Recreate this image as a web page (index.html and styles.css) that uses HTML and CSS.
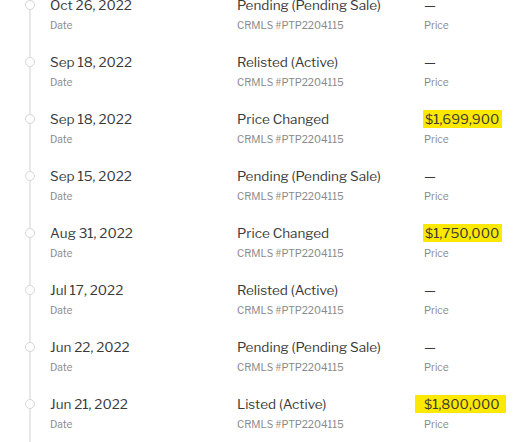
FILE: index.html
```html
<!DOCTYPE html>
<html lang="en">
<head>
  <meta charset="UTF-8">
  <meta name="viewport" content="width=device-width, initial-scale=1.0">
  <title>Property History</title>
  <link rel="stylesheet" href="styles.css">
</head>
<body>
  <ul class="history">
    <li class="event">
      <span class="dot"></span>
      <div class="cell"><div class="main">Oct 26, 2022</div><div class="label">Date</div></div>
      <div class="cell"><div class="main">Pending (Pending Sale)</div><div class="label">CRMLS #PTP2204115</div></div>
      <div class="cell"><div class="main">&mdash;</div><div class="label">Price</div></div>
    </li>
    <li class="event">
      <span class="dot"></span>
      <div class="cell"><div class="main">Sep 18, 2022</div><div class="label">Date</div></div>
      <div class="cell"><div class="main">Relisted (Active)</div><div class="label">CRMLS #PTP2204115</div></div>
      <div class="cell"><div class="main">&mdash;</div><div class="label">Price</div></div>
    </li>
    <li class="event">
      <span class="dot"></span>
      <div class="cell"><div class="main">Sep 18, 2022</div><div class="label">Date</div></div>
      <div class="cell"><div class="main">Price Changed</div><div class="label">CRMLS #PTP2204115</div></div>
      <div class="cell"><div class="main"><mark class="hl">$1,699,900</mark></div><div class="label">Price</div></div>
    </li>
    <li class="event">
      <span class="dot"></span>
      <div class="cell"><div class="main">Sep 15, 2022</div><div class="label">Date</div></div>
      <div class="cell"><div class="main">Pending (Pending Sale)</div><div class="label">CRMLS #PTP2204115</div></div>
      <div class="cell"><div class="main">&mdash;</div><div class="label">Price</div></div>
    </li>
    <li class="event">
      <span class="dot"></span>
      <div class="cell"><div class="main">Aug 31, 2022</div><div class="label">Date</div></div>
      <div class="cell"><div class="main">Price Changed</div><div class="label">CRMLS #PTP2204115</div></div>
      <div class="cell"><div class="main"><mark class="hl">$1,750,000</mark></div><div class="label">Price</div></div>
    </li>
    <li class="event">
      <span class="dot"></span>
      <div class="cell"><div class="main">Jul 17, 2022</div><div class="label">Date</div></div>
      <div class="cell"><div class="main">Relisted (Active)</div><div class="label">CRMLS #PTP2204115</div></div>
      <div class="cell"><div class="main">&mdash;</div><div class="label">Price</div></div>
    </li>
    <li class="event">
      <span class="dot"></span>
      <div class="cell"><div class="main">Jun 22, 2022</div><div class="label">Date</div></div>
      <div class="cell"><div class="main">Pending (Pending Sale)</div><div class="label">CRMLS #PTP2204115</div></div>
      <div class="cell"><div class="main">&mdash;</div><div class="label">Price</div></div>
    </li>
    <li class="event">
      <span class="dot"></span>
      <div class="cell"><div class="main">Jun 21, 2022</div><div class="label">Date</div></div>
      <div class="cell"><div class="main">Listed (Active)</div><div class="label">CRMLS #PTP2204115</div></div>
      <div class="cell"><div class="main"><mark class="hl hl-wide">$1,800,000</mark></div><div class="label">Price</div></div>
    </li>
  </ul>
</body>
</html>
```

FILE: styles.css
```css
body {
  font-family: "Libre Franklin", Lato, "Liberation Sans", sans-serif;
  background: #ffffff;
  color: #333333;
  margin: 0;
}

.history {
  list-style: none;
  margin: -5px 0 0;
  padding: 0;
  background: linear-gradient(#e8e8e8, #e8e8e8) no-repeat 29px 0 / 2px 100%;
}

.event {
  display: grid;
  grid-template-columns: 50px 187px 187px 1fr;
  height: 57px;
}

.dot {
  width: 8px;
  height: 8px;
  margin: 5px 0 0 25px;
  border: 1px solid #d6d6d6;
  border-radius: 50%;
  background: #ffffff;
}

.main {
  font-size: 13.5px;
  line-height: 20px;
  color: #3a3a3a;
  white-space: nowrap;
}

.label {
  margin-top: 3px;
  font-size: 10.2px;
  line-height: 16px;
  color: #8a8a8a;
  white-space: nowrap;
}

.hl {
  background: #fde800;
  color: #3a3a3a;
  padding: 1px 3px 1px 2px;
  margin-left: -1px;
}

.hl-wide {
  padding: 1px 6px 1px 9px;
  margin-left: -9px;
}
```
